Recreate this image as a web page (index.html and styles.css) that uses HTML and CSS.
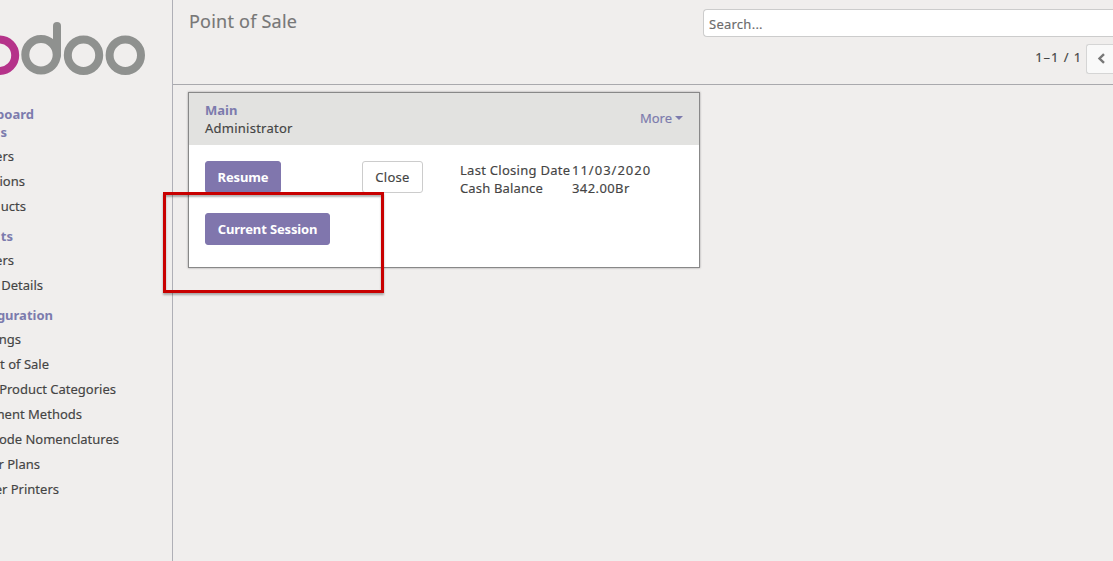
FILE: index.html
```html
<!DOCTYPE html>
<html lang="en">
<head>
<meta charset="utf-8">
<title>Point of Sale</title>
<link rel="stylesheet" href="styles.css">
</head>
<body>
<div class="app">
  <aside class="sidebar">
    <svg class="logo" width="150" height="60" viewBox="0 0 150 60" fill="none" stroke-width="8">
      <circle cx="-0.5" cy="35.3" r="15.7" stroke="#b5338a"/>
      <g stroke="#8f918f">
        <circle cx="41" cy="34.8" r="15.7"/>
        <path d="M57 35.3V6" stroke-linecap="round"/>
        <circle cx="83.5" cy="35.3" r="15.7"/>
        <circle cx="125.3" cy="35.3" r="15.7"/>
      </g>
    </svg>
    <nav class="menu">
      <h4 class="head" style="width:34px"><span>board</span></h4>
      <h4 class="head" style="width:7px"><span>s</span></h4>
      <a class="item" style="width:14px"><span>ers</span></a>
      <a class="item" style="width:25px"><span>ions</span></a>
      <a class="item" style="width:26px"><span>ucts</span></a>
      <h4 class="head gap" style="width:13px"><span>ts</span></h4>
      <a class="item" style="width:14px"><span>ers</span></a>
      <a class="item" style="width:43px"><span>Details</span></a>
      <h4 class="head gap" style="width:53px"><span>guration</span></h4>
      <a class="item" style="width:21px"><span>ngs</span></a>
      <a class="item" style="width:49px"><span>t of Sale</span></a>
      <a class="item" style="width:116px"><span>Product Categories</span></a>
      <a class="item" style="width:82px"><span>ment Methods</span></a>
      <a class="item" style="width:119px"><span>ode Nomenclatures</span></a>
      <a class="item" style="width:40px"><span>r Plans</span></a>
      <a class="item" style="width:59px"><span>er Printers</span></a>
    </nav>
  </aside>
  <main class="main">
    <header class="control">
      <h1 class="title">Point of Sale</h1>
      <div class="tools">
        <div class="search"><span>Search...</span></div>
        <div class="pager">
          <span class="count">1–1 / 1</span>
          <button class="prev"><svg width="8" height="11" viewBox="0 0 8 11"><path d="M7 1.2L2.5 5.5L7 9.8" fill="none" stroke="#777" stroke-width="2.4"/></svg></button>
        </div>
      </div>
    </header>
    <section class="card">
      <div class="card-head">
        <div><div class="name">Main</div><div class="user">Administrator</div></div>
        <div class="more"><span>More</span><i class="caret"></i></div>
      </div>
      <div class="card-body">
        <div class="primary">
          <button class="btn resume"><span>Resume</span></button>
          <button class="btn current"><span>Current Session</span></button>
        </div>
        <button class="btn close"><span>Close</span></button>
        <div class="info">
          <span class="closing">Last Closing Date</span><span class="date">11/03/2020</span>
          <span class="cash">Cash Balance</span><span class="amount">342.00Br</span>
        </div>
      </div>
    </section>
  </main>
  <div class="highlight"></div>
</div>
</body>
</html>
```
FILE: styles.css
```css
* { box-sizing: border-box; }
body {
  margin: 0;
  background: #f0eeed;
  color: #444;
  font: 13px/18px "Noto Sans", "Open Sans", sans-serif;
  -webkit-text-stroke: .15px;
  overflow: hidden;
}
.app { position: relative; display: flex; width: 1113px; height: 561px; }
.sidebar { width: 173px; padding-top: 20px; border-right: 1px solid #afafb6; }
.logo { display: block; overflow: hidden; }
.menu { padding-top: 25px; }
.head, .item {
  display: flex;
  justify-content: flex-end;
  white-space: nowrap;
}
.head { height: 18px; margin: 0; font-size: 13px; font-weight: 700; color: #7c7bad; -webkit-text-stroke: 0; }
.head + .item { margin-top: 3px; }
.gap { margin-top: 8px; }
.item { height: 25px; line-height: 25px; }
.main { flex: 1; min-width: 0; }
.control {
  display: flex;
  justify-content: space-between;
  height: 85px;
  padding-left: 16px;
  border-bottom: 1px solid #a9a9ad;
}
.title { margin: 9px 0 0; font-size: 18px; line-height: 25px; font-weight: 400; color: #777; letter-spacing: .22px; }
.tools { width: 410px; padding-top: 9px; }
.search {
  height: 28px;
  padding: 0 5px;
  border: 1px solid #ccc;
  border-right: 0;
  border-radius: 4px 0 0 4px;
  background: #fff;
  line-height: 28px;
  color: #6c6c6c;
  letter-spacing: .25px;
}
.pager { display: flex; justify-content: flex-end; margin-top: 7px; }
.count { padding: 4px 4px 0 0; letter-spacing: .9px; }
.prev {
  width: 27px;
  height: 30px;
  padding: 0 0 0 10px;
  border: 1px solid #d5d5d5;
  border-right: 0;
  border-radius: 3px 0 0 3px;
  background: #f9f9f9;
  text-align: left;
}
.card {
  width: 512px;
  height: 176px;
  margin: 7px 0 0 15px;
  border: 1px solid #888;
  background: #fff;
  box-shadow: 0 0 2px rgba(0, 0, 0, .35);
}
.card-head {
  display: flex;
  justify-content: space-between;
  height: 52px;
  padding: 8px 16px 0;
  background: #e2e2e0;
}
.name { color: #7c7bad; font-weight: 700; -webkit-text-stroke: 0; }
.user { letter-spacing: .25px; }
.more { display: flex; align-items: center; gap: 3px; height: 18px; margin-top: 8px; color: #7c7bad; }
.caret { border: 4px solid transparent; border-top-color: #7c7bad; border-bottom: 0; }
.card-body { display: grid; grid-template-columns: 157px 98px 1fr; align-items: start; padding: 16px; }
.primary { display: grid; gap: 20px; justify-items: start; }
.btn {
  height: 32px;
  padding: 0;
  border: 1px solid #8076ad;
  border-radius: 3px;
  background: #8076ad;
  color: #fff;
  font: 700 13px/30px "Noto Sans", sans-serif;
  letter-spacing: -.15px;
  -webkit-text-stroke: 0;
  white-space: nowrap;
}
.resume { width: 76px; }
.current { width: 125px; }
.close {
  width: 61px;
  border-color: #ccc;
  background: #fff;
  color: #444;
  font-weight: 400;
  letter-spacing: .3px;
  -webkit-text-stroke: .15px;
}
.info { display: grid; grid-template-columns: 112px 1fr; white-space: nowrap; }
.closing { letter-spacing: .28px; }
.cash { letter-spacing: .15px; }
.date { letter-spacing: 1px; }
.amount { letter-spacing: .4px; }
.highlight {
  position: absolute;
  left: 163px;
  top: 192px;
  width: 221px;
  height: 101px;
  border: 3px solid #c80000;
  box-shadow: 0 2px 2px rgba(0, 0, 0, .3), inset 0 2px 2px rgba(0, 0, 0, .3);
}
```
